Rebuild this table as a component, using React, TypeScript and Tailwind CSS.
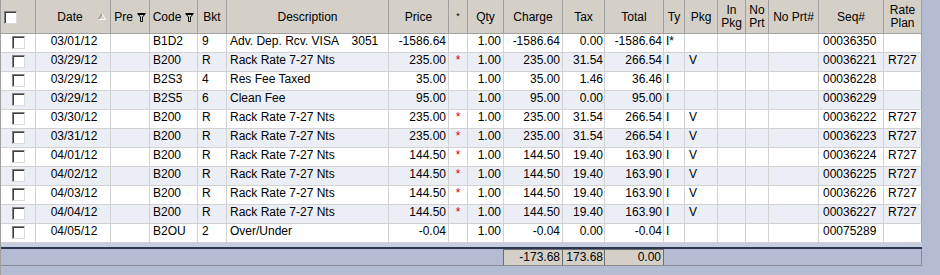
import React from "react";

const GRID =
  "grid grid-cols-[35px_75px_39px_48px_29px_162px_60px_19px_36px_59px_42px_59px_21px_33px_28px_23px_50px_65px_38px]";

type Row = {
  date: string;
  code: string;
  bkt: string;
  desc: string;
  price: string;
  star: boolean;
  charge: string;
  tax: string;
  total: string;
  ty: string;
  pkg: string;
  seq: string;
  rp: string;
};

const rack = (date: string, price: string, tax: string, total: string, seq: string): Row => ({
  date,
  code: "B200",
  bkt: "R",
  desc: "Rack Rate 7-27 Nts",
  price,
  star: true,
  charge: price,
  tax,
  total,
  ty: "I",
  pkg: "V",
  seq,
  rp: "R727",
});

const rows: Row[] = [
  {
    date: "03/01/12",
    code: "B1D2",
    bkt: "9",
    desc: "Adv. Dep. Rcv. VISA    3051",
    price: "-1586.64",
    star: false,
    charge: "-1586.64",
    tax: "0.00",
    total: "-1586.64",
    ty: "I*",
    pkg: "",
    seq: "00036350",
    rp: "",
  },
  rack("03/29/12", "235.00", "31.54", "266.54", "00036221"),
  {
    date: "03/29/12",
    code: "B2S3",
    bkt: "4",
    desc: "Res Fee Taxed",
    price: "35.00",
    star: false,
    charge: "35.00",
    tax: "1.46",
    total: "36.46",
    ty: "I",
    pkg: "",
    seq: "00036228",
    rp: "",
  },
  {
    date: "03/29/12",
    code: "B2S5",
    bkt: "6",
    desc: "Clean Fee",
    price: "95.00",
    star: false,
    charge: "95.00",
    tax: "0.00",
    total: "95.00",
    ty: "I",
    pkg: "",
    seq: "00036229",
    rp: "",
  },
  rack("03/30/12", "235.00", "31.54", "266.54", "00036222"),
  rack("03/31/12", "235.00", "31.54", "266.54", "00036223"),
  rack("04/01/12", "144.50", "19.40", "163.90", "00036224"),
  rack("04/02/12", "144.50", "19.40", "163.90", "00036225"),
  rack("04/03/12", "144.50", "19.40", "163.90", "00036226"),
  rack("04/04/12", "144.50", "19.40", "163.90", "00036227"),
  {
    date: "04/05/12",
    code: "B2OU",
    bkt: "2",
    desc: "Over/Under",
    price: "-0.04",
    star: false,
    charge: "-0.04",
    tax: "0.00",
    total: "-0.04",
    ty: "I",
    pkg: "",
    seq: "00075289",
    rp: "",
  },
];

function Check() {
  return (
    <span className="block w-[13px] h-[13px] bg-white border border-t-[#808080] border-l-[#808080] border-r-[#dcdcdc] border-b-[#dcdcdc] shadow-[inset_1px_1px_0_#404040]" />
  );
}

function Funnel() {
  return (
    <svg width="9" height="9" viewBox="0 0 9 9" className="block">
      <path d="M0.5 0.5H8.5L5.5 4V8.5H3.5V4Z" fill="none" stroke="#000" strokeWidth="1" />
      <path d="M1 1.5H8" stroke="#000" strokeWidth="1" />
    </svg>
  );
}

function SortUp() {
  return (
    <svg width="8" height="7" viewBox="0 0 8 7" className="block">
      <path d="M0.5 6.5L4 0.5" stroke="#808080" strokeWidth="1" fill="none" />
      <path d="M4 0.5L7.5 6.5H0.5" stroke="#ffffff" strokeWidth="1" fill="none" />
    </svg>
  );
}

const H = "border-r border-b border-[#a0a0a0] bg-[#d4d0c8] h-[34px] flex items-center justify-center text-center leading-[13px] pt-[1px]";
const C = "border-r border-b border-[#d2d2d2] h-[19px] leading-[15px] whitespace-pre overflow-hidden";

export default function App() {
  return (
    <div className="w-[940px] h-[275px] bg-[#b4bcd4] flex overflow-hidden font-['Liberation_Sans',Arial,sans-serif] text-[12px] text-black">
      <div className="w-[922px] h-full border-l border-[#a0a0a0] flex flex-col">
        {/* header */}
        <div className={GRID}>
          <div className={H + " !justify-start pl-[3px]"}>
            <Check />
          </div>
          <div className={H + " relative"}>
            <span className="mr-[6px]">Date</span>
            <span className="absolute right-[4px] top-[13px]">
              <SortUp />
            </span>
          </div>
          <div className={H + " gap-[4px]"}>
            <span>Pre</span>
            <Funnel />
          </div>
          <div className={H + " gap-[4px]"}>
            <span>Code</span>
            <Funnel />
          </div>
          <div className={H}>Bkt</div>
          <div className={H}>Description</div>
          <div className={H}>Price</div>
          <div className={H + " text-[9px] !items-start pt-[10px]"}>*</div>
          <div className={H}>Qty</div>
          <div className={H}>Charge</div>
          <div className={H}>Tax</div>
          <div className={H}>Total</div>
          <div className={H}>Ty</div>
          <div className={H}>Pkg</div>
          <div className={H + " flex-col"}>
            <span>In</span>
            <span>Pkg</span>
          </div>
          <div className={H + " flex-col"}>
            <span>No</span>
            <span>Prt</span>
          </div>
          <div className={H}>No Prt#</div>
          <div className={H}>Seq#</div>
          <div className={H + " flex-col"}>
            <span>Rate</span>
            <span>Plan</span>
          </div>
        </div>

        {/* rows */}
        {rows.map((r, i) => (
          <div key={i} className={GRID + (i % 2 === 1 ? " bg-[#eceef5]" : " bg-white")}>
            <div className={C + " flex justify-center pt-[2px]"}>
              <Check />
            </div>
            <div className={C + " text-center pl-[2px]"}>{r.date}</div>
            <div className={C}></div>
            <div className={C + " pl-[3px]"}>{r.code}</div>
            <div className={C + " pl-[4px]"}>{r.bkt}</div>
            <div className={C + " pl-[3px]"}>{r.desc}</div>
            <div className={C + " text-right pr-[2px]"}>{r.price}</div>
            <div className={C + " text-center text-[#e00000]"}>{r.star ? "*" : ""}</div>
            <div className={C + " text-right pr-[2px]"}>1.00</div>
            <div className={C + " text-right pr-[2px]"}>{r.charge}</div>
            <div className={C + " text-right pr-[1px]"}>{r.tax}</div>
            <div className={C + " text-right pr-[1px]"}>{r.total}</div>
            <div className={C + " pl-[2px]"}>{r.ty}</div>
            <div className={C + " pl-[4px]"}>{r.pkg}</div>
            <div className={C}></div>
            <div className={C}></div>
            <div className={C}></div>
            <div className={C + " pl-[4px]"}>{r.seq}</div>
            <div className={C + " pl-[4px] border-r-[#a0a0a0]"}>{r.rp}</div>
          </div>
        ))}

        {/* footer */}
        <div className="h-[4px] bg-[#c6cde1]" />
        <div className="h-[2px] bg-[#2b3552]" />
        <div className={GRID + " h-[17px] border-b border-[#8a8a94]"}>
          <div />
          <div />
          <div />
          <div />
          <div />
          <div />
          <div />
          <div />
          <div className="border-r border-[#6e6e6e]" />
          <div className="bg-[#d4d0c8] border-t border-r border-[#6e6e6e] text-right pr-[2px] leading-[14px]">-173.68</div>
          <div className="bg-[#d4d0c8] border-t border-r border-[#6e6e6e] text-right pr-[1px] leading-[14px]">173.68</div>
          <div className="bg-[#d4d0c8] border-t border-r border-[#6e6e6e] text-right pr-[2px] leading-[14px]">0.00</div>
          <div />
          <div />
          <div />
          <div />
          <div />
          <div />
          <div className="border-r border-[#8a8a94]" />
        </div>
      </div>
    </div>
  );
}
